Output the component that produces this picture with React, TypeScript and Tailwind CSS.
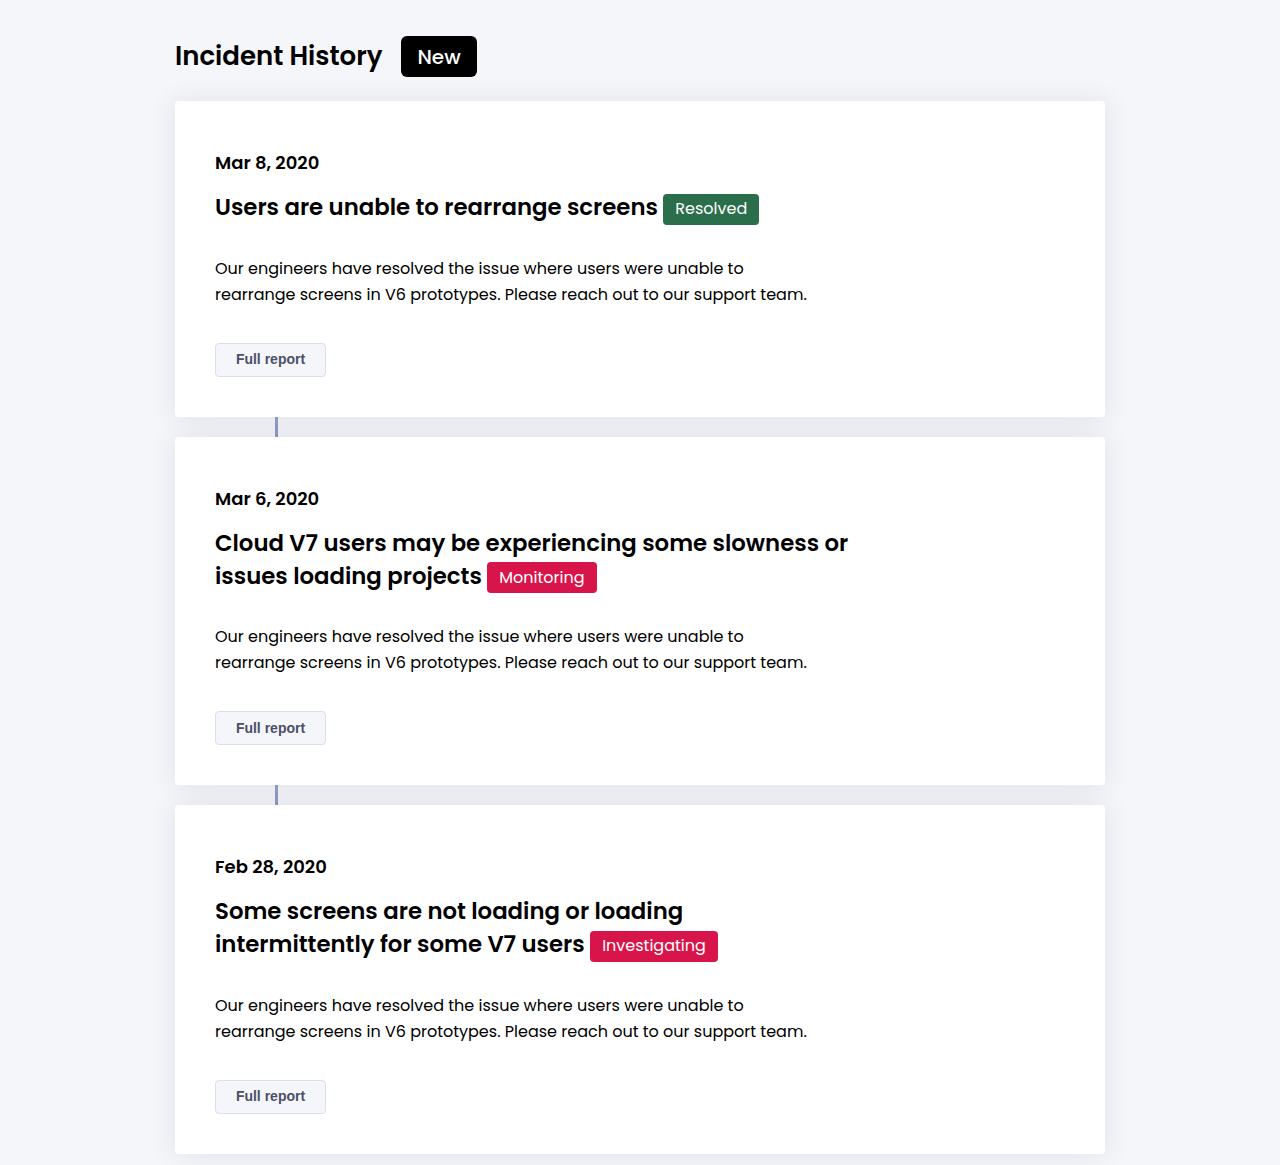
const incidents = [
  {
    date: "Mar 8, 2020",
    title: "Users are unable to rearrange screens",
    status: "Resolved",
    tone: "bg-[#2b6e4b]",
    width: "max-w-[640px]",
  },
  {
    date: "Mar 6, 2020",
    title: "Cloud V7 users may be experiencing some slowness or issues loading projects",
    status: "Monitoring",
    tone: "bg-[#d7154a]",
    width: "max-w-[645px]",
  },
  {
    date: "Feb 28, 2020",
    title: "Some screens are not loading or loading intermittently for some V7 users",
    status: "Investigating",
    tone: "bg-[#d7154a]",
    width: "max-w-[600px]",
  },
]

const body = "Our engineers have resolved the issue where users were unable to rearrange screens in V6 prototypes. Please reach out to our support team."

type Incident = (typeof incidents)[number]

const IncidentCard = ({ date, title, status, tone, width }: Incident) => {
  return (
    <div className="bg-white rounded-[4px] shadow-[0_0_28px_rgba(20,24,60,0.09)] pt-[50px] pb-[40px] px-[40px]">
      <div className="text-[18px] leading-[24px] font-semibold text-black">{date}</div>
      <h2 className={`${width} mt-[16px] text-[22.8px] leading-[33px] font-semibold text-black`}>
        {title}{" "}
        <span className={`${tone} inline-block align-[1px] rounded-[4px] px-[12px] py-[3.5px] text-[16px] leading-[24px] font-normal text-white`}>
          {status}
        </span>
      </h2>
      <p className="mt-[31px] max-w-[600px] text-[16px] leading-[26px] text-black">{body}</p>
      <button className="mt-[35px] w-[111px] h-[34px] rounded-[4px] border border-[#dcdfe9] bg-[#f5f6fa] text-[14px] font-bold text-[#4b5068] font-['Liberation_Sans',Arial,sans-serif]">
        Full report
      </button>
    </div>
  )
}

const App = () => {
  return (
    <div className="min-h-screen bg-[#f5f6fa] font-['Poppins','Inter',sans-serif] pt-[36px] pb-[10px]">
      <div className="w-[930px] ml-[175px]">
        <div className="flex items-center gap-[19px]">
          <h1 className="text-[26px] font-semibold text-black leading-[41px]">Incident History</h1>
          <span className="bg-black text-white rounded-[6px] px-[16px] h-[41px] flex items-center text-[20px] font-medium">New</span>
        </div>
        <div className="mt-[24px] flex flex-col">
          {incidents.map((item, i) => (
            <div key={item.date}>
              {i > 0 && <div className="h-[20px] w-[3px] ml-[100px] bg-[#8d9bc0]" />}
              <IncidentCard {...item} />
            </div>
          ))}
        </div>
      </div>
    </div>
  )
}

export default App
